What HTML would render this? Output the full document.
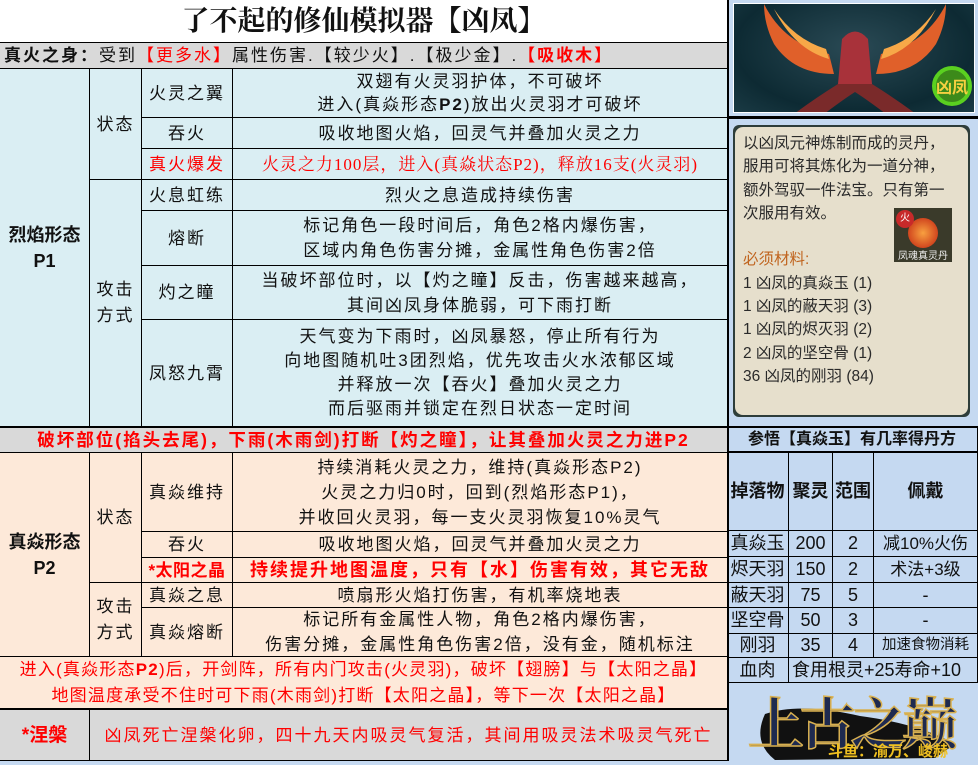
<!DOCTYPE html>
<html><head><meta charset="utf-8"><style>
*{margin:0;padding:0;box-sizing:border-box}
body{width:978px;height:761px;position:relative;overflow:hidden;background:#c5d9f1;font-family:"Liberation Sans","Noto Sans CJK SC",sans-serif;font-size:17px;color:#111}
.c{position:absolute;display:flex;align-items:center;justify-content:center;text-align:center;border-right:1px solid #000;border-bottom:1px solid #000;line-height:25px;white-space:nowrap}
.L{letter-spacing:2px}
.r{color:#f00}
.b{font-weight:bold}
.blue{background:#daeef3}.peach{background:#fde9d9}.gray{background:#d9d9d9}
.hl{position:absolute;background:#000}
.rt{font-size:18px}
</style></head><body>
<div class="c" style="left:0;top:0;width:728px;height:43px;background:#fff;font-family:'Liberation Serif','Noto Serif CJK SC',serif;font-size:28px;font-weight:bold">了不起的修仙模拟器【凶凤】</div>
<div class="c gray L" style="left:0;top:43px;width:728px;height:26px;justify-content:flex-start;padding-left:4px;font-size:17px"><div><span class="b">真火之身：</span>受到<span class="r">【更多水】</span>属性伤害.【较少火】.【极少金】.<span class="r b">【吸收木】</span></div></div>

<div class="c blue b" style="left:0;top:69px;width:90px;height:358px;font-size:18px;line-height:26px"><div>烈焰形态<br>P1</div></div>
<div class="c blue L" style="left:90px;top:69px;width:52px;height:111px">状态</div>
<div class="c blue L" style="left:90px;top:180px;width:52px;height:247px;line-height:26px"><div>攻击<br>方式</div></div>
<div class="c blue L" style="left:142px;top:69px;width:91px;height:49px">火灵之翼</div>
<div class="c blue L" style="left:233px;top:69px;width:495px;height:49px;line-height:23px"><div>双翅有火灵羽护体，不可破坏<br>进入(真焱形态<b>P2</b>)放出火灵羽才可破坏</div></div>
<div class="c blue L" style="left:142px;top:118px;width:91px;height:31px">吞火</div>
<div class="c blue L" style="left:233px;top:118px;width:495px;height:31px">吸收地图火焰，回灵气并叠加火灵之力</div>
<div class="c blue r L" style="left:142px;top:149px;width:91px;height:31px">真火爆发</div>
<div class="c blue r" style="left:233px;top:149px;width:495px;height:31px;font-family:'Liberation Serif','Noto Serif CJK SC',serif;font-size:17px;letter-spacing:1px">火灵之力100层，进入(真焱状态P2)，释放16支(火灵羽)</div>
<div class="c blue L" style="left:142px;top:180px;width:91px;height:31px">火息虹练</div>
<div class="c blue L" style="left:233px;top:180px;width:495px;height:31px">烈火之息造成持续伤害</div>
<div class="c blue L" style="left:142px;top:211px;width:91px;height:55px">熔断</div>
<div class="c blue L" style="left:233px;top:211px;width:495px;height:55px"><div>标记角色一段时间后，角色2格内爆伤害，<br>区域内角色伤害分摊，金属性角色伤害2倍</div></div>
<div class="c blue L" style="left:142px;top:266px;width:91px;height:54px">灼之瞳</div>
<div class="c blue L" style="left:233px;top:266px;width:495px;height:54px"><div>当破坏部位时，以【灼之瞳】反击，伤害越来越高，<br>其间凶凤身体脆弱，可下雨打断</div></div>
<div class="c blue L" style="left:142px;top:320px;width:91px;height:107px">凤怒九霄</div>
<div class="c blue L" style="left:233px;top:320px;width:495px;height:107px;line-height:24px"><div>天气变为下雨时，凶凤暴怒，停止所有行为<br>向地图随机吐3团烈焰，优先攻击火水浓郁区域<br>并释放一次【吞火】叠加火灵之力<br>而后驱雨并锁定在烈日状态一定时间</div></div>

<div class="c gray r b L" style="left:0;top:426px;width:728px;height:27px;font-size:17.5px;border-top:2px solid #000">破坏部位(掐头去尾)，下雨(木雨剑)打断【灼之瞳】，让其叠加火灵之力进P2</div>

<div class="c peach b" style="left:0;top:453px;width:90px;height:204px;font-size:18px;line-height:26px"><div>真焱形态<br>P2</div></div>
<div class="c peach L" style="left:90px;top:453px;width:52px;height:130px">状态</div>
<div class="c peach L" style="left:90px;top:583px;width:52px;height:74px;line-height:26px"><div>攻击<br>方式</div></div>
<div class="c peach L" style="left:142px;top:453px;width:91px;height:79px">真焱维持</div>
<div class="c peach L" style="left:233px;top:453px;width:495px;height:79px;line-height:25px"><div>持续消耗火灵之力，维持(真焱形态P2)<br>火灵之力归0时，回到(烈焰形态P1)，<br>并收回火灵羽，每一支火灵羽恢复10%灵气</div></div>
<div class="c peach L" style="left:142px;top:532px;width:91px;height:26px">吞火</div>
<div class="c peach L" style="left:233px;top:532px;width:495px;height:26px">吸收地图火焰，回灵气并叠加火灵之力</div>
<div class="c peach r b" style="left:142px;top:558px;width:91px;height:25px;letter-spacing:0.5px">*太阳之晶</div>
<div class="c peach r b L" style="left:233px;top:558px;width:495px;height:25px;font-size:18px">持续提升地图温度，只有【水】伤害有效，其它无敌</div>
<div class="c peach L" style="left:142px;top:583px;width:91px;height:25px">真焱之息</div>
<div class="c peach L" style="left:233px;top:583px;width:495px;height:25px">喷扇形火焰打伤害，有机率烧地表</div>
<div class="c peach L" style="left:142px;top:608px;width:91px;height:49px">真焱熔断</div>
<div class="c peach L" style="left:233px;top:608px;width:495px;height:49px;line-height:25px"><div>标记所有金属性人物，角色2格内爆伤害，<br>伤害分摊，金属性角色伤害2倍，没有金，随机标注</div></div>

<div class="c peach r" style="left:0;top:657px;width:728px;height:52px;line-height:26px;font-size:17px;letter-spacing:1.2px"><div>进入(真焱形态<b>P2</b>)后，开剑阵，所有内门攻击(火灵羽)，破坏【翅膀】与【太阳之晶】<br>地图温度承受不住时可下雨(木雨剑)打断【太阳之晶】，等下一次【太阳之晶】</div></div>
<div class="c gray r b" style="left:0;top:708px;width:90px;height:53px;font-size:19px;border-top:2px solid #000">*涅槃</div>
<div class="c gray r L" style="left:90px;top:708px;width:638px;height:53px;border-top:2px solid #000;font-size:17px">凶凤死亡涅槃化卵，四十九天内吸灵气复活，其间用吸灵法术吸灵气死亡</div>

<div style="position:absolute;left:733px;top:3px;width:242px;height:110px;border:1px solid #fff;background:radial-gradient(ellipse at 50% 40%,#2a4a55,#0d2a33 70%,#1a3a44);overflow:hidden">
<svg width="242" height="110" viewBox="0 0 242 110">
<path d="M30 0 Q50 40 95 50 L100 70 Q60 70 40 40 Q30 20 30 0Z" fill="#e0602a"/>
<path d="M212 0 Q192 40 147 50 L142 70 Q182 70 202 40 Q212 20 212 0Z" fill="#e0602a"/>
<path d="M40 5 Q60 35 92 45 L95 55 Q60 45 40 5Z" fill="#f7a848"/>
<path d="M202 5 Q182 35 150 45 L147 55 Q182 45 202 5Z" fill="#f7a848"/>
<path d="M108 35 Q121 20 134 35 L138 80 Q121 90 104 80Z" fill="#a8323a"/>
<path d="M104 80 Q80 95 60 110 L90 110 Q110 95 121 88 Q132 95 152 110 L182 110 Q162 95 138 80Z" fill="#7a2a2a"/>
<circle cx="218" cy="82" r="18" fill="#3c8a1a" stroke="#5ad020" stroke-width="4"/>
<text x="218" y="89" font-size="16" font-weight="bold" fill="#f5d040" text-anchor="middle" font-family="Noto Sans CJK SC">凶凤</text>
</svg></div>
<div class="hl" style="left:727px;top:116px;width:251px;height:3px"></div>
<div style="position:absolute;left:733px;top:125px;width:237px;height:292px;background:#2e3d3a;border-radius:6px">
<div style="position:absolute;left:2px;top:2px;right:2px;bottom:2px;background:#e6dfcc;border-radius:8px;padding:5px 0 0 8px;font-size:15.5px;line-height:23.3px;color:#2a2a2a;white-space:nowrap">
以凶凤元神炼制而成的灵丹，<br>服用可将其炼化为一道分神，<br>额外驾驭一件法宝。只有第一<br>次服用有效。<br><br>
<span style="color:#c0641e">必须材料:</span><br>1 凶凤的真焱玉 (1)<br>1 凶凤的蔽天羽 (3)<br>1 凶凤的烬灭羽 (2)<br>2 凶凤的坚空骨 (1)<br>36 凶凤的刚羽 (84)</div>
<div style="position:absolute;left:161px;top:83px;width:58px;height:54px;background:#3a3a2a"><div style="position:absolute;left:14px;top:10px;width:30px;height:30px;border-radius:50%;background:radial-gradient(#f8a040,#c02010)"></div><div style="position:absolute;left:2px;top:2px;width:18px;height:18px;border-radius:50%;background:#c82a2a;color:#fff;font-size:10px;line-height:18px;text-align:center">火</div><div style="position:absolute;left:0;bottom:0;width:58px;font-size:10px;color:#eee;text-align:center">凤魂真灵丹</div></div>
</div>
<div class="hl" style="left:727px;top:426px;width:251px;height:2px"></div>
<div class="c b" style="left:727px;top:428px;width:251px;height:25px;border-bottom:2px solid #000;font-size:16px">参悟【真焱玉】有几率得丹方</div>
<div class="c b" style="left:727px;top:453px;width:62px;height:78px;font-size:18px">掉落物</div>
<div class="c b" style="left:789px;top:453px;width:44px;height:78px;font-size:18px">聚灵</div>
<div class="c b" style="left:833px;top:453px;width:41px;height:78px;font-size:18px">范围</div>
<div class="c b" style="left:874px;top:453px;width:104px;height:78px;font-size:18px">佩戴</div>
<div class="c rt" style="left:727px;top:531px;width:62px;height:26px">真焱玉</div><div class="c rt" style="left:789px;top:531px;width:44px;height:26px">200</div><div class="c rt" style="left:833px;top:531px;width:41px;height:26px">2</div><div class="c" style="left:874px;top:531px;width:104px;height:26px;font-size:17px">减10%火伤</div>
<div class="c rt" style="left:727px;top:557px;width:62px;height:26px">烬天羽</div><div class="c rt" style="left:789px;top:557px;width:44px;height:26px">150</div><div class="c rt" style="left:833px;top:557px;width:41px;height:26px">2</div><div class="c" style="left:874px;top:557px;width:104px;height:26px;font-size:17px">术法+3级</div>
<div class="c rt" style="left:727px;top:583px;width:62px;height:25px">蔽天羽</div><div class="c rt" style="left:789px;top:583px;width:44px;height:25px">75</div><div class="c rt" style="left:833px;top:583px;width:41px;height:25px">5</div><div class="c rt" style="left:874px;top:583px;width:104px;height:25px">-</div>
<div class="c rt" style="left:727px;top:608px;width:62px;height:26px">坚空骨</div><div class="c rt" style="left:789px;top:608px;width:44px;height:26px">50</div><div class="c rt" style="left:833px;top:608px;width:41px;height:26px">3</div><div class="c rt" style="left:874px;top:608px;width:104px;height:26px">-</div>
<div class="c rt" style="left:727px;top:634px;width:62px;height:24px">刚羽</div><div class="c rt" style="left:789px;top:634px;width:44px;height:24px">35</div><div class="c rt" style="left:833px;top:634px;width:41px;height:24px">4</div><div class="c" style="left:874px;top:634px;width:104px;height:24px;font-size:14.5px">加速食物消耗</div>
<div class="c rt" style="left:727px;top:658px;width:62px;height:25px">血肉</div><div class="c rt" style="left:789px;top:658px;width:189px;height:25px;justify-content:flex-start;padding-left:3px;overflow:hidden">食用根灵+25寿命+10</div>
<div style="position:absolute;left:740px;top:684px;width:230px;height:76px">
<svg width="230" height="76"><path d="M25 30 Q60 18 120 32 Q180 40 215 60 L195 74 L35 76 Q12 58 25 30Z" fill="#111"/>
<text x="8" y="60" font-size="56" font-weight="bold" fill="#1e2a50" stroke="#d8b050" stroke-width="1.5" font-family="Noto Serif CJK SC" textLength="210">上古之巅</text>
<text x="88" y="72" font-size="15" font-weight="bold" fill="#f0c020" font-family="Noto Sans CJK SC">斗鱼：渝万、峻赫</text></svg></div>
<div class="hl" style="left:727px;top:0;width:2px;height:761px"></div>
</body></html>
